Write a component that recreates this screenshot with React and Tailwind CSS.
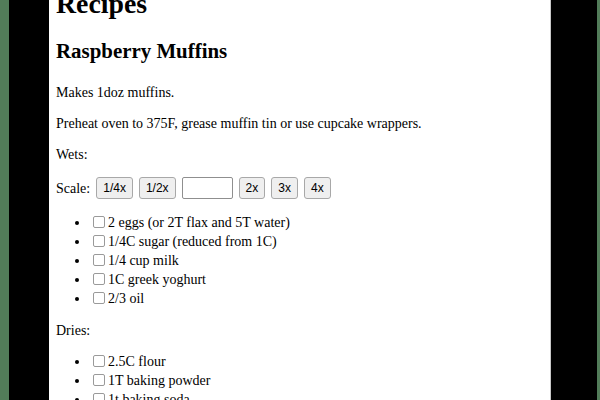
import React from "react";

const wets = [
  "2 eggs (or 2T flax and 5T water)",
  "1/4C sugar (reduced from 1C)",
  "1/4 cup milk",
  "1C greek yoghurt",
  "2/3 oil",
];

const dries = ["2.5C flour", "1T baking powder", "1t baking soda", "1/2t salt"];

const Ingredient = ({ text }) => (
  <li className="leading-[19px]">
    <span className="inline-block w-[12px] h-[12px] ml-[3px] mr-[3px] border border-[#9a9a9a] rounded-[2px] bg-white align-[-1px]"></span>
    {text}
  </li>
);

const ScaleButton = ({ label }) => (
  <button className="h-[22px] px-[6px] bg-[#efefef] border border-[#a8a8a8] rounded-[3px] text-[12px] text-black font-['Liberation_Sans',Arial,sans-serif]">
    {label}
  </button>
);

export default function App() {
  return (
    <div className="flex w-[600px] h-[400px] overflow-hidden bg-black">
      <div className="w-[9px] shrink-0 bg-[#527c59]"></div>
      <div className="w-[40px] shrink-0 bg-black"></div>
      <div className="flex-1 min-w-0 bg-white overflow-hidden border-r border-[#c8c8c8] pl-[7px] text-black font-['Liberation_Serif','Times_New_Roman',serif] text-[14px] leading-[17px]">
        <h1 className="-mt-[12px] text-[27.8px] leading-[32px] font-bold">Recipes</h1>
        <h2 className="mt-[19px] text-[20.9px] leading-[24px] font-bold">Raspberry Muffins</h2>
        <p className="mt-[21px]">Makes 1doz muffins.</p>
        <p className="mt-[14px]">Preheat oven to 375F, grease muffin tin or use cupcake wrappers.</p>
        <p className="mt-[14px]">Wets:</p>
        <div className="mt-[14px] flex items-center gap-[6px] h-[22px]">
          <span>Scale:</span>
          <ScaleButton label="1/4x" />
          <ScaleButton label="1/2x" />
          <input
            type="text"
            className="w-[51px] h-[22px] border border-[#8f8f8f] rounded-[2px] bg-white px-[2px] text-[12px]"
          />
          <ScaleButton label="2x" />
          <ScaleButton label="3x" />
          <ScaleButton label="4x" />
        </div>
        <ul className="mt-[14px] pl-[34px] list-disc">
          {wets.map((w) => (
            <Ingredient key={w} text={w} />
          ))}
        </ul>
        <p className="mt-[14px]">Dries:</p>
        <ul className="mt-[13px] pl-[34px] list-disc">
          {dries.map((d) => (
            <Ingredient key={d} text={d} />
          ))}
        </ul>
      </div>
      <div className="w-[46px] shrink-0 bg-black"></div>
      <div className="w-[3px] shrink-0 bg-[#527c59]"></div>
    </div>
  );
}
